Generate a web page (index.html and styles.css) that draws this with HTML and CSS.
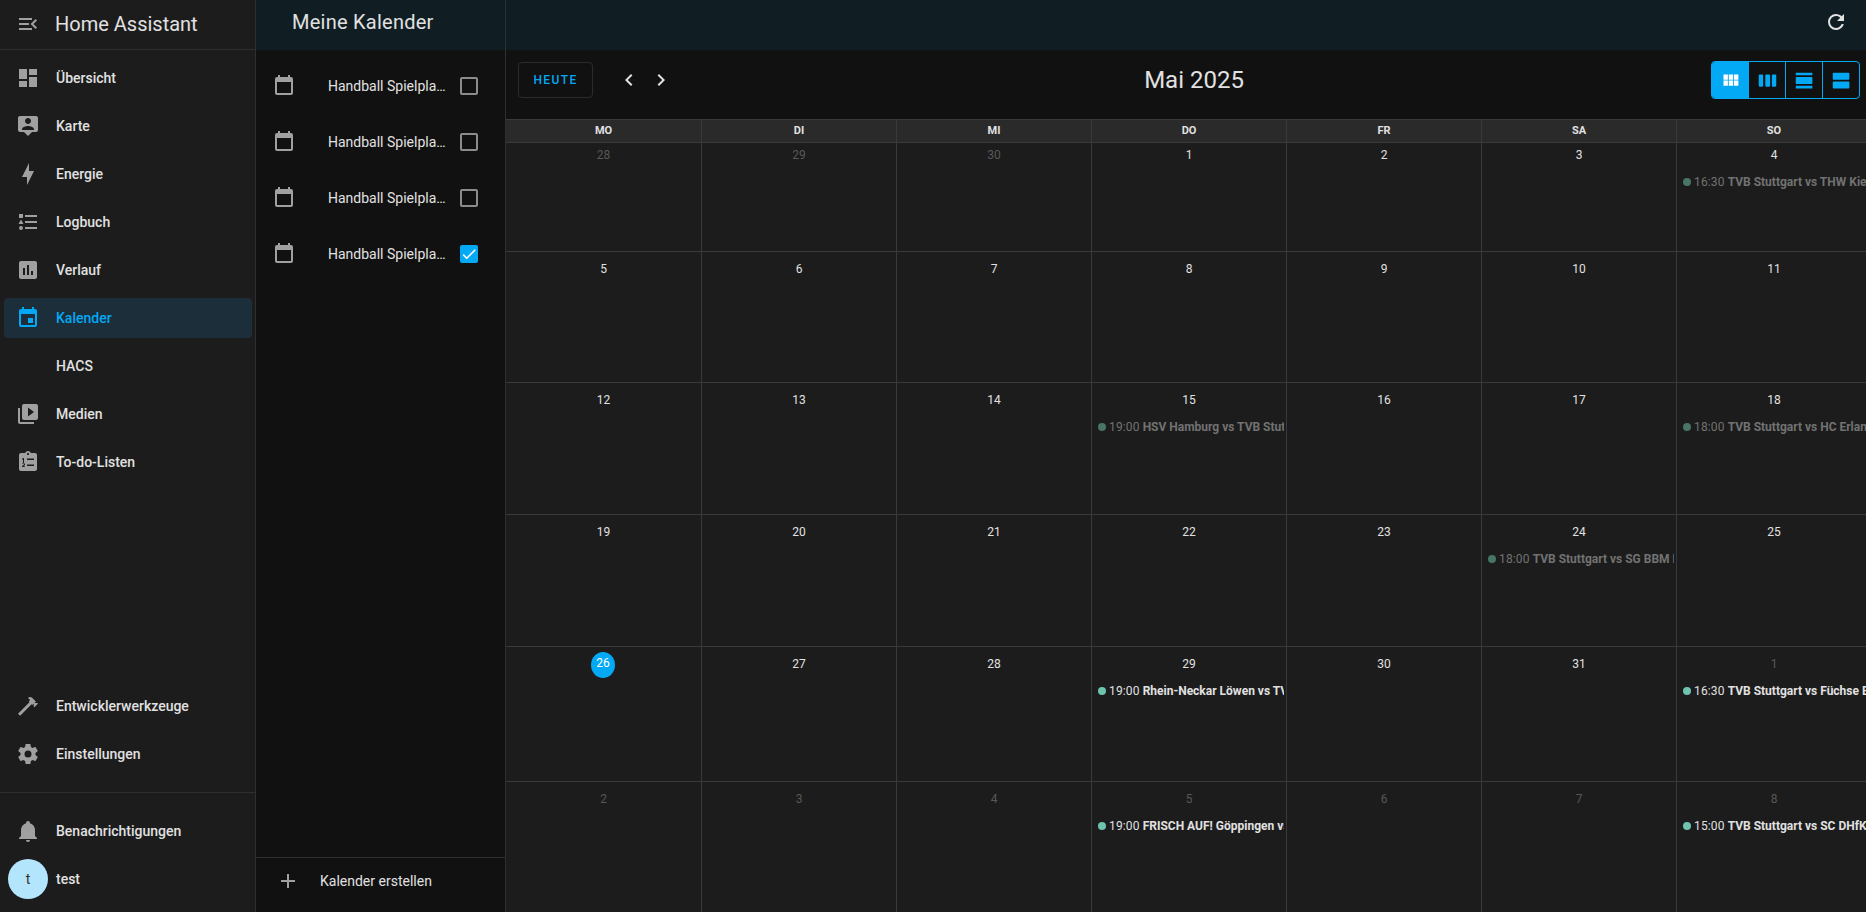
FILE: index.html
```html
<!DOCTYPE html>
<html lang="de">
<head>
    <meta charset="UTF-8">
    <meta name="viewport" content="width=device-width, initial-scale=1.0">
    <title>Kalender - Home Assistant</title>
    <link rel="stylesheet" href="styles.css">
</head>
<body>
    <aside class="sidebar">
        <div class="sidebar-head">
            <svg class="icon" viewBox="0 0 24 24"><path d="M21,15.61L19.59,17L14.58,12L19.59,7L21,8.39L17.44,12L21,15.61M3,6H16V8H3V6M3,13V11H13V13H3M3,18V16H16V18H3Z"/></svg>
            <span class="sidebar-title">Home Assistant</span>
        </div>
        <nav class="nav">
            <a class="nav-item"><svg class="icon" viewBox="0 0 24 24"><path d="M13,3V9H21V3M13,21H21V11H13M3,21H11V15H3M3,13H11V3H3V13Z"/></svg><span>Übersicht</span></a>
            <a class="nav-item"><svg class="icon" viewBox="0 0 24 24"><path fill-rule="evenodd" d="M20 2H4C2.89 2 2 2.89 2 4V16C2 17.11 2.9 18 4 18H8L12 22L16 18H20C21.11 18 22 17.11 22 16V4C22 2.89 21.11 2 20 2M12 4C13.66 4 15 5.34 15 7C15 8.66 13.66 10 12 10C10.34 10 9 8.66 9 7C9 5.34 10.34 4 12 4M18 16H6V15C6 13 10 11.9 12 11.9C14 11.9 18 13 18 15V16Z"/></svg><span>Karte</span></a>
            <a class="nav-item"><svg class="icon" viewBox="0 0 24 24"><path d="M11 15H6L13 1V9H18L11 23V15Z"/></svg><span>Energie</span></a>
            <a class="nav-item"><svg class="icon" viewBox="0 0 24 24"><path d="M5,9.5L7.5,14H2.5L5,9.5M3,4H7V8H3V4M5,20A2,2 0 0,0 7,18A2,2 0 0,0 5,16A2,2 0 0,0 3,18A2,2 0 0,0 5,20M9,5V7H21V5H9M9,19H21V17H9V19M9,13H21V11H9V13Z"/></svg><span>Logbuch</span></a>
            <a class="nav-item"><svg class="icon" viewBox="0 0 24 24"><path fill-rule="evenodd" d="M19 3H5C3.9 3 3 3.9 3 5V19C3 20.1 3.9 21 5 21H19C20.1 21 21 20.1 21 19V5C21 3.9 20.1 3 19 3M9 17H7V10H9V17M13 17H11V7H13V17M17 17H15V13H17V17Z"/></svg><span>Verlauf</span></a>
            <a class="nav-item active"><svg class="icon" viewBox="0 0 24 24"><path fill-rule="evenodd" d="M19,19H5V8H19M16,1V3H8V1H6V3H5C3.89,3 3,3.89 3,5V19A2,2 0 0,0 5,21H19A2,2 0 0,0 21,19V5C21,3.89 20.1,3 19,3H18V1M17,12H12V17H17V12Z"/></svg><span>Kalender</span></a>
            <a class="nav-item"><span class="icon-gap"></span><span>HACS</span></a>
            <a class="nav-item"><svg class="icon" viewBox="0 0 24 24"><path d="M4,6H2V20A2,2 0 0,0 4,22H18V20H4V6M20,2H8A2,2 0 0,0 6,4V16A2,2 0 0,0 8,18H20A2,2 0 0,0 22,16V4A2,2 0 0,0 20,2M12,14.5V5.5L18,10L12,14.5Z"/></svg><span>Medien</span></a>
            <a class="nav-item"><svg class="icon" viewBox="0 0 24 24"><path fill-rule="evenodd" d="M19 3H14.82C14.4 1.84 13.3 1 12 1S9.6 1.84 9.18 3H5C3.9 3 3 3.9 3 5V19C3 20.1 3.9 21 5 21H19C20.1 21 21 20.1 21 19V5C21 3.9 20.1 3 19 3M7 8H8V13H7V9.5H6V9L7 8M9 17H6V16L8 14.5V14H6V13.5H9V15L7.2 16.3H9V17M18 16H11V14.5H18V16M18 10H11V8.5H18V10M12 3C12.55 3 13 3.45 13 4S12.55 5 12 5 11 4.55 11 4 11.45 3 12 3Z"/></svg><span>To-do-Listen</span></a>
        </nav>
        <div class="nav nav-tools">
            <a class="nav-item"><svg class="icon" viewBox="0 0 24 24"><path d="M2 19.63L13.43 8.2L12.72 7.5L14.14 6.07L12 3.89C13.2 2.7 15.09 2.7 16.27 3.89L19.87 7.5L18.45 8.91H21.29L22 9.62L18.45 13.21L17.74 12.5V9.62L16.27 11.04L15.56 10.33L4.13 21.76L2 19.63Z"/></svg><span>Entwicklerwerkzeuge</span></a>
            <a class="nav-item"><svg class="icon" viewBox="0 0 24 24"><path fill-rule="evenodd" d="M12,15.5A3.5,3.5 0 0,1 8.5,12A3.5,3.5 0 0,1 12,8.5A3.5,3.5 0 0,1 15.5,12A3.5,3.5 0 0,1 12,15.5M19.43,12.97C19.47,12.65 19.5,12.33 19.5,12C19.5,11.67 19.47,11.34 19.43,11L21.54,9.37C21.73,9.22 21.78,8.95 21.66,8.73L19.66,5.27C19.54,5.05 19.27,4.96 19.05,5.05L16.56,6.05C16.04,5.66 15.5,5.32 14.87,5.07L14.5,2.42C14.46,2.18 14.25,2 14,2H10C9.75,2 9.54,2.18 9.5,2.42L9.13,5.07C8.5,5.32 7.96,5.66 7.44,6.05L4.95,5.05C4.73,4.96 4.46,5.05 4.34,5.27L2.34,8.73C2.21,8.95 2.27,9.22 2.46,9.37L4.57,11C4.53,11.34 4.5,11.67 4.5,12C4.5,12.33 4.53,12.65 4.57,12.97L2.46,14.63C2.27,14.78 2.21,15.05 2.34,15.27L4.34,18.73C4.46,18.95 4.73,19.03 4.95,18.95L7.44,17.94C7.96,18.34 8.5,18.68 9.13,18.93L9.5,21.58C9.54,21.82 9.75,22 10,22H14C14.25,22 14.46,21.82 14.5,21.58L14.87,18.93C15.5,18.67 16.04,18.34 16.56,17.94L19.05,18.95C19.27,19.03 19.54,18.95 19.66,18.73L21.66,15.27C21.78,15.05 21.73,14.78 21.54,14.63L19.43,12.97Z"/></svg><span>Einstellungen</span></a>
        </div>
        <div class="nav nav-user">
            <a class="nav-item"><svg class="icon" viewBox="0 0 24 24"><path d="M21,19V20H3V19L5,17V11C5,7.9 7.03,5.17 10,4.29C10,4.19 10,4.1 10,4A2,2 0 0,1 12,2A2,2 0 0,1 14,4C14,4.1 14,4.19 14,4.29C16.97,5.17 19,7.9 19,11V17L21,19M14,21A2,2 0 0,1 12,23A2,2 0 0,1 10,21"/></svg><span>Benachrichtigungen</span></a>
            <a class="nav-item user-item"><span class="avatar">t</span><span>test</span></a>
        </div>
    </aside>

    <section class="calendars">
        <header class="topbar calendars-head">Meine Kalender</header>
        <ul class="calendar-list">
            <li class="calendar-row">
                <svg class="icon" viewBox="0 0 24 24"><path fill-rule="evenodd" d="M19,19H5V8H19M16,1V3H8V1H6V3H5C3.89,3 3,3.89 3,5V19A2,2 0 0,0 5,21H19A2,2 0 0,0 21,19V5C21,3.89 20.1,3 19,3H18V1"/></svg>
                <span class="calendar-name">Handball Spielplan TVB Stuttgart</span>
                <span class="checkbox"></span>
            </li>
            <li class="calendar-row">
                <svg class="icon" viewBox="0 0 24 24"><path fill-rule="evenodd" d="M19,19H5V8H19M16,1V3H8V1H6V3H5C3.89,3 3,3.89 3,5V19A2,2 0 0,0 5,21H19A2,2 0 0,0 21,19V5C21,3.89 20.1,3 19,3H18V1"/></svg>
                <span class="calendar-name">Handball Spielplan TVB Stuttgart</span>
                <span class="checkbox"></span>
            </li>
            <li class="calendar-row">
                <svg class="icon" viewBox="0 0 24 24"><path fill-rule="evenodd" d="M19,19H5V8H19M16,1V3H8V1H6V3H5C3.89,3 3,3.89 3,5V19A2,2 0 0,0 5,21H19A2,2 0 0,0 21,19V5C21,3.89 20.1,3 19,3H18V1"/></svg>
                <span class="calendar-name">Handball Spielplan TVB Stuttgart</span>
                <span class="checkbox"></span>
            </li>
            <li class="calendar-row">
                <svg class="icon" viewBox="0 0 24 24"><path fill-rule="evenodd" d="M19,19H5V8H19M16,1V3H8V1H6V3H5C3.89,3 3,3.89 3,5V19A2,2 0 0,0 5,21H19A2,2 0 0,0 21,19V5C21,3.89 20.1,3 19,3H18V1"/></svg>
                <span class="calendar-name">Handball Spielplan TVB Stuttgart</span>
                <span class="checkbox checked"><svg viewBox="0 0 24 24"><path d="M21,7L9,19L3.5,13.5L4.91,12.09L9,16.17L19.59,5.59L21,7Z"/></svg></span>
            </li>
        </ul>
        <div class="calendar-add">
            <svg class="icon" viewBox="0 0 24 24"><path d="M19,13H13V19H11V13H5V11H11V5H13V11H19V13Z"/></svg>
            <span>Kalender erstellen</span>
        </div>
    </section>

    <main class="main">
        <header class="topbar main-head">
            <svg class="icon" viewBox="0 0 24 24"><path d="M17.65,6.35C16.2,4.9 14.21,4 12,4A8,8 0 0,0 4,12A8,8 0 0,0 12,20C15.73,20 18.84,17.45 19.73,14H17.65C16.83,16.33 14.61,18 12,18A6,6 0 0,1 6,12A6,6 0 0,1 12,6C13.66,6 15.14,6.69 16.22,7.78L13,11H20V4L17.65,6.35Z"/></svg>
        </header>
        <div class="toolbar">
            <div class="toolbar-left">
                <button class="today-btn">HEUTE</button>
                <span class="chevron first"><svg class="icon" viewBox="0 0 24 24"><path d="M15.41,16.58L10.83,12L15.41,7.41L14,6L8,12L14,18L15.41,16.58Z"/></svg></span>
                <span class="chevron"><svg class="icon" viewBox="0 0 24 24"><path d="M8.59,16.58L13.17,12L8.59,7.41L10,6L16,12L10,18L8.59,16.58Z"/></svg></span>
            </div>
            <h1 class="month">Mai 2025</h1>
            <div class="views">
                <span class="view active"><svg viewBox="0 0 24 24"><path d="M16,5V11H21V5M10,11H15V5H10M16,18H21V12H16M10,18H15V12H10M4,18H9V12H4M4,11H9V5H4V11Z"/></svg></span>
                <span class="view"><svg viewBox="0 0 24 24"><path d="M6,5H3C2.45,5 2,5.45 2,6V18C2,18.55 2.45,19 3,19H6C6.55,19 7,18.55 7,18V6C7,5.45 6.55,5 6,5M14,5H10.5C9.95,5 9.5,5.45 9.5,6V18C9.5,18.55 9.95,19 10.5,19H14C14.55,19 15,18.55 15,18V6C15,5.45 14.55,5 14,5M21,5H18C17.45,5 17,5.45 17,6V18C17,18.55 17.45,19 18,19H21C21.55,19 22,18.55 22,18V6C22,5.45 21.55,5 21,5Z"/></svg></span>
                <span class="view"><svg viewBox="0 0 24 24"><path d="M2,3V6H21V3M20,8H3A1,1 0 0,0 2,9V15A1,1 0 0,0 3,16H20A1,1 0 0,0 21,15V9A1,1 0 0,0 20,8M2,21H21V18H2V21Z"/></svg></span>
                <span class="view"><svg viewBox="0 0 24 24"><path d="M20,3H3A1,1 0 0,0 2,4V10A1,1 0 0,0 3,11H20A1,1 0 0,0 21,10V4A1,1 0 0,0 20,3M20,13H3A1,1 0 0,0 2,14V20A1,1 0 0,0 3,21H20A1,1 0 0,0 21,20V14A1,1 0 0,0 20,13Z"/></svg></span>
            </div>
        </div>
        <div class="month-grid">
            <div class="weekday">MO</div><div class="weekday">DI</div><div class="weekday">MI</div><div class="weekday">DO</div><div class="weekday">FR</div><div class="weekday">SA</div><div class="weekday">SO</div>

            <div class="day first-week other"><span class="num">28</span></div>
            <div class="day first-week other"><span class="num">29</span></div>
            <div class="day first-week other"><span class="num">30</span></div>
            <div class="day first-week"><span class="num">1</span></div>
            <div class="day first-week"><span class="num">2</span></div>
            <div class="day first-week"><span class="num">3</span></div>
            <div class="day first-week"><span class="num">4</span>
                <div class="event past"><i class="dot"></i><span class="time">16:30</span><b>TVB Stuttgart vs THW Kiel</b></div>
            </div>

            <div class="day"><span class="num">5</span></div>
            <div class="day"><span class="num">6</span></div>
            <div class="day"><span class="num">7</span></div>
            <div class="day"><span class="num">8</span></div>
            <div class="day"><span class="num">9</span></div>
            <div class="day"><span class="num">10</span></div>
            <div class="day"><span class="num">11</span></div>

            <div class="day"><span class="num">12</span></div>
            <div class="day"><span class="num">13</span></div>
            <div class="day"><span class="num">14</span></div>
            <div class="day"><span class="num">15</span>
                <div class="event past"><i class="dot"></i><span class="time">19:00</span><b>HSV Hamburg vs TVB Stuttgart</b></div>
            </div>
            <div class="day"><span class="num">16</span></div>
            <div class="day"><span class="num">17</span></div>
            <div class="day"><span class="num">18</span>
                <div class="event past"><i class="dot"></i><span class="time">18:00</span><b>TVB Stuttgart vs HC Erlangen</b></div>
            </div>

            <div class="day"><span class="num">19</span></div>
            <div class="day"><span class="num">20</span></div>
            <div class="day"><span class="num">21</span></div>
            <div class="day"><span class="num">22</span></div>
            <div class="day"><span class="num">23</span></div>
            <div class="day"><span class="num">24</span>
                <div class="event past"><i class="dot"></i><span class="time">18:00</span><b>TVB Stuttgart vs SG BBM Bietigheim</b></div>
            </div>
            <div class="day"><span class="num">25</span></div>

            <div class="day"><span class="num today">26</span></div>
            <div class="day"><span class="num">27</span></div>
            <div class="day"><span class="num">28</span></div>
            <div class="day"><span class="num">29</span>
                <div class="event"><i class="dot"></i><span class="time">19:00</span><b>Rhein-Neckar Löwen vs TVB Stuttgart</b></div>
            </div>
            <div class="day"><span class="num">30</span></div>
            <div class="day"><span class="num">31</span></div>
            <div class="day other"><span class="num">1</span>
                <div class="event"><i class="dot"></i><span class="time">16:30</span><b>TVB Stuttgart vs Füchse Berlin</b></div>
            </div>

            <div class="day other"><span class="num">2</span></div>
            <div class="day other"><span class="num">3</span></div>
            <div class="day other"><span class="num">4</span></div>
            <div class="day other"><span class="num">5</span>
                <div class="event"><i class="dot"></i><span class="time">19:00</span><b>FRISCH AUF! Göppingen vs TVB Stuttgart</b></div>
            </div>
            <div class="day other"><span class="num">6</span></div>
            <div class="day other"><span class="num">7</span></div>
            <div class="day other"><span class="num">8</span>
                <div class="event"><i class="dot"></i><span class="time">15:00</span><b>TVB Stuttgart vs SC DHfK Leipzig</b></div>
            </div>
        </div>
    </main>
</body>
</html>
```

FILE: styles.css
```css
* {
    box-sizing: border-box;
}

html, body {
    height: 100%;
}

body {
    display: flex;
    margin: 0;
    overflow: hidden;
    background-color: #111111;
    color: #e1e1e1;
    font-family: Roboto, "Liberation Sans", sans-serif;
    font-size: 14px;
}

.icon {
    flex: none;
    width: 24px;
    height: 24px;
    fill: #a0a0a0;
}

.icon-gap {
    flex: none;
    width: 24px;
}

/* sidebar */
.sidebar {
    flex: none;
    display: flex;
    flex-direction: column;
    width: 256px;
    background-color: #1c1c1c;
    border-right: 1px solid #2f2f2f;
}

.sidebar-head {
    flex: none;
    display: flex;
    align-items: center;
    gap: 15px;
    height: 50px;
    padding: 0 0 2px 16px;
    border-bottom: 1px solid #2f2f2f;
}

.sidebar-title {
    font-size: 20px;
}

.nav {
    display: flex;
    flex-direction: column;
    gap: 8px;
    padding-top: 8px;
}

.nav-tools {
    margin-top: auto;
    padding-top: 0;
    padding-bottom: 18px;
    border-bottom: 1px solid #2f2f2f;
}

.nav-user {
    padding-top: 18px;
    padding-bottom: 13px;
}

.nav-item {
    display: flex;
    align-items: center;
    gap: 16px;
    height: 40px;
    margin: 0 3px 0 4px;
    padding-left: 12px;
    border-radius: 4px;
    font-weight: 500;
}

.nav-item.active {
    background-color: #1b2e39;
    color: #03a9f4;
}

.nav-item.active .icon {
    fill: #03a9f4;
}

.user-item {
    gap: 8px;
    padding-left: 4px;
}

.avatar {
    flex: none;
    width: 40px;
    height: 40px;
    border-radius: 50%;
    background-color: #b3e5fc;
    color: #333333;
    font-weight: 400;
    line-height: 40px;
    text-align: center;
}

/* shared header strip */
.topbar {
    flex: none;
    height: 50px;
    background-color: #101e24;
}

/* calendar list */
.calendars {
    flex: none;
    display: flex;
    flex-direction: column;
    width: 250px;
    border-right: 1px solid #2f2f2f;
}

.calendars-head {
    padding-left: 36px;
    font-size: 20px;
    letter-spacing: 0.25px;
    line-height: 44px;
}

.calendar-list {
    flex: 1;
    margin: 0;
    padding: 8px 0 0;
    list-style: none;
}

.calendar-row {
    display: flex;
    align-items: center;
    height: 56px;
    padding: 0 27px 0 16px;
}

.calendar-name {
    flex: 1;
    min-width: 0;
    margin: 0 12px 0 32px;
    overflow: hidden;
    white-space: nowrap;
    text-overflow: ellipsis;
}

.checkbox {
    flex: none;
    width: 18px;
    height: 18px;
    border: 2px solid #8c8c8c;
    border-radius: 2px;
}

.checkbox.checked {
    border: none;
    background-color: #03a9f4;
}

.checkbox svg {
    display: block;
    width: 18px;
    height: 18px;
    fill: #ffffff;
}

.calendar-add {
    flex: none;
    display: flex;
    align-items: center;
    gap: 20px;
    height: 55px;
    padding: 0 0 8px 20px;
    border-top: 1px solid #2f2f2f;
}

/* main area */
.main {
    flex: 1;
    min-width: 0;
    display: flex;
    flex-direction: column;
    overflow: hidden;
}

.main-head {
    display: flex;
    justify-content: flex-end;
    padding: 10px 18px 0 0;
}

.main-head .icon {
    fill: #e1e1e1;
}

.toolbar {
    flex: none;
    display: flex;
    justify-content: space-between;
    height: 69px;
    padding: 11px 6px 0 12px;
}

.toolbar-left {
    display: flex;
    align-items: center;
    height: 38px;
}

.today-btn {
    width: 75px;
    height: 36px;
    padding: 0;
    border: 1px solid #2b2b2b;
    border-radius: 4px;
    background: none;
    color: #03a9f4;
    font-family: inherit;
    font-size: 12px;
    font-weight: 500;
    letter-spacing: 1.4px;
}

.chevron {
    display: flex;
    justify-content: center;
    width: 32px;
}

.chevron.first {
    margin-left: 20px;
}

.chevron .icon {
    fill: #e1e1e1;
}

.month {
    margin: 0;
    font-size: 24px;
    font-weight: 400;
    line-height: 38px;
}

.views {
    display: flex;
    height: 38px;
    border: 1px solid #03a9f4;
    border-radius: 4px;
    overflow: hidden;
}

.view {
    display: flex;
    align-items: center;
    justify-content: center;
    width: 37px;
    border-left: 1px solid #03a9f4;
}

.view:first-child {
    width: 36px;
    border-left: none;
}

.view svg {
    width: 21px;
    height: 21px;
    fill: #03a9f4;
}

.view.active {
    background-color: #03a9f4;
}

.view.active svg {
    fill: #ffffff;
}

/* month grid */
.month-grid {
    flex: none;
    display: grid;
    width: 1366px;
    grid-template-columns: 196px repeat(6, 195px);
    grid-template-rows: 24px 109px 131px 132px 132px 135px 135px;
    background-color: #1c1c1c;
}

.weekday {
    border-top: 1px solid #3a3a3a;
    border-right: 1px solid #3a3a3a;
    border-bottom: 1px solid #3a3a3a;
    background-color: #2a2a2a;
    font-size: 11px;
    font-weight: 700;
    line-height: 22px;
    text-align: center;
}

.day {
    min-width: 0;
    padding-top: 5px;
    border-right: 1px solid #3a3a3a;
    border-bottom: 1px solid #3a3a3a;
    text-align: center;
}

.day.first-week {
    padding-top: 0;
}

.num {
    display: block;
    font-size: 12px;
    line-height: 24px;
}

.other .num {
    color: #585858;
}

.num.today {
    width: 24px;
    height: 26px;
    margin-left: 85px;
    border-radius: 50%;
    background-color: #03a9f4;
    color: #ffffff;
    line-height: 22px;
}

.event {
    display: flex;
    align-items: center;
    height: 20px;
    margin: 5px 2px 0 6px;
    overflow: hidden;
    font-size: 12px;
    white-space: nowrap;
}

.event .time {
    margin: 0 3px 0 3px;
    letter-spacing: 0.15px;
}

.event b {
    font-weight: 700;
}

.dot {
    flex: none;
    width: 8px;
    height: 8px;
    border-radius: 50%;
    background-color: #6dc3ae;
}

.event.past {
    color: #727272;
}

.event.past .dot {
    background-color: #477666;
}
```
